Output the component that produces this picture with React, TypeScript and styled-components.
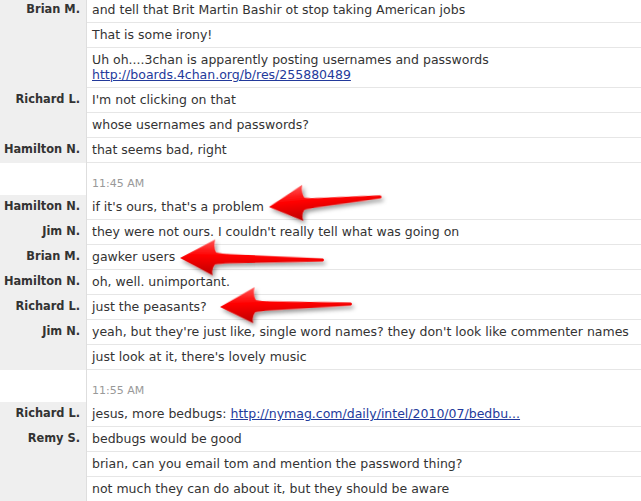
import React from 'react';
import styled, {createGlobalStyle} from 'styled-components';

const GlobalStyle = createGlobalStyle`
  html, body {
    margin: 0;
    padding: 0;
    background: #ffffff;
    overflow: hidden;
  }
  body {
    font-family: "DejaVu Sans", Verdana, sans-serif;
    color: #333333;
  }
`;

const Transcript = styled.div`
  position: relative;
  width: 641px;
  height: 501px;
  overflow: hidden;
`;

const List = styled.div`
  margin-top: -2px;
  display: flex;
  flex-direction: column;
`;

const Row = styled.div`
  display: flex;
  align-items: stretch;
`;

const NameCell = styled.div<{ $blank?: boolean }>`
  flex: 0 0 87px;
  width: 87px;
  box-sizing: border-box;
  background: ${props => (props.$blank ? '#ffffff' : '#efefef')};
  border-right: 1px solid #dedede;
  text-align: right;
  padding: 4px 6px 5px 0;
  font-size: 11.4px;
  line-height: 15px;
  font-weight: bold;
  color: #333333;
  white-space: nowrap;
`;

const MessageCell = styled.div`
  flex: 1;
  padding: 4px 5px 5px 5px;
  border-bottom: 1px solid #e6e6e6;
  font-size: 12.5px;
  line-height: 15px;
  color: #333333;
  white-space: nowrap;
`;

const TimeCell = styled.div`
  flex: 1;
  padding: 14px 5px 5px 5px;
  font-size: 11px;
  line-height: 13px;
  color: #999999;
`;

const Link = styled.a`
  color: #233a9b;
  text-decoration: underline;
`;

const Overlay = styled.svg`
  position: absolute;
  left: 0;
  top: 0;
  pointer-events: none;
`;

type Entry =
  | { kind: 'msg'; name?: string; text: React.ReactNode }
  | { kind: 'time'; time: string };

const entries: Entry[] = [
  {kind: 'msg', name: 'Brian M.', text: 'and tell that Brit Martin Bashir ot stop taking American jobs'},
  {kind: 'msg', text: 'That is some irony!'},
  {
    kind: 'msg',
    text: (
      <>
        Uh oh....3chan is apparently posting usernames and passwords
        <br/>
        <Link href="#">http://boards.4chan.org/b/res/255880489</Link>
      </>
    ),
  },
  {kind: 'msg', name: 'Richard L.', text: "I'm not clicking on that"},
  {kind: 'msg', text: 'whose usernames and passwords?'},
  {kind: 'msg', name: 'Hamilton N.', text: 'that seems bad, right'},
  {kind: 'time', time: '11:45 AM'},
  {kind: 'msg', name: 'Hamilton N.', text: "if it's ours, that's a problem"},
  {kind: 'msg', name: 'Jim N.', text: "they were not ours. I couldn't really tell what was going on"},
  {kind: 'msg', name: 'Brian M.', text: 'gawker users'},
  {kind: 'msg', name: 'Hamilton N.', text: 'oh, well. unimportant.'},
  {kind: 'msg', name: 'Richard L.', text: 'just the peasants?'},
  {kind: 'msg', name: 'Jim N.', text: "yeah, but they're just like, single word names? they don't look like commenter names"},
  {kind: 'msg', text: "just look at it, there's lovely music"},
  {kind: 'time', time: '11:55 AM'},
  {
    kind: 'msg',
    name: 'Richard L.',
    text: (
      <>
        jesus, more bedbugs: <Link href="#">http://nymag.com/daily/intel/2010/07/bedbu...</Link>
      </>
    ),
  },
  {kind: 'msg', name: 'Remy S.', text: 'bedbugs would be good'},
  {kind: 'msg', text: 'brian, can you email tom and mention the password thing?'},
  {kind: 'msg', text: 'not much they can do about it, but they should be aware'},
];

interface ArrowProps {
  x: number;
  y: number;
  length: number;
  angle: number;
}

// red "look here" arrow, tip at (x, y), tail off to the right
const Arrow = ({x, y, length, angle}: ArrowProps) => {
  const L = length;
  const d = [
    'M 0 0',
    'Q 17 -9 35 -19',
    'Q 33 -11 36 -6',
    'Q 42 -5 50 -4.5',
    `L ${L} -1.6`,
    `Q ${L + 2} 0 ${L} 1.6`,
    'L 50 4.5',
    'Q 40 5 35 6',
    'Q 31 11 33 17',
    'Q 16 8 0 0',
    'Z',
  ].join(' ');
  return (
    <g transform={`translate(${x} ${y}) rotate(${angle})`} filter="url(#arrowShadow)">
      <path d={d} fill="url(#arrowFill)"/>
    </g>
  );
};

const Arrows = () => (
  <Overlay width="641" height="501" viewBox="0 0 641 501">
    <defs>
      <linearGradient id="arrowFill" x1="0" y1="-18" x2="0" y2="16" gradientUnits="userSpaceOnUse">
        <stop offset="0" stopColor="#ff5050"/>
        <stop offset="0.45" stopColor="#ff0000"/>
        <stop offset="1" stopColor="#c00000"/>
      </linearGradient>
      <filter id="arrowShadow" x="-20%" y="-60%" width="140%" height="220%">
        <feDropShadow dx="2" dy="3" stdDeviation="2" floodColor="#000000" floodOpacity="0.4"/>
      </filter>
    </defs>
    <Arrow x={269} y={207} length={112} angle={-5.2}/>
    <Arrow x={180} y={258} length={143} angle={0.8}/>
    <Arrow x={220} y={307} length={131} angle={-1.3}/>
  </Overlay>
);

const App = () => (
  <>
    <GlobalStyle/>
    <Transcript>
      <List>
        {entries.map((entry, i) =>
          entry.kind === 'time' ? (
            <Row key={i}>
              <NameCell $blank/>
              <TimeCell>{entry.time}</TimeCell>
            </Row>
          ) : (
            <Row key={i}>
              <NameCell>{entry.name ?? ''}</NameCell>
              <MessageCell>{entry.text}</MessageCell>
            </Row>
          )
        )}
      </List>
      <Arrows/>
    </Transcript>
  </>
);

export default App;
